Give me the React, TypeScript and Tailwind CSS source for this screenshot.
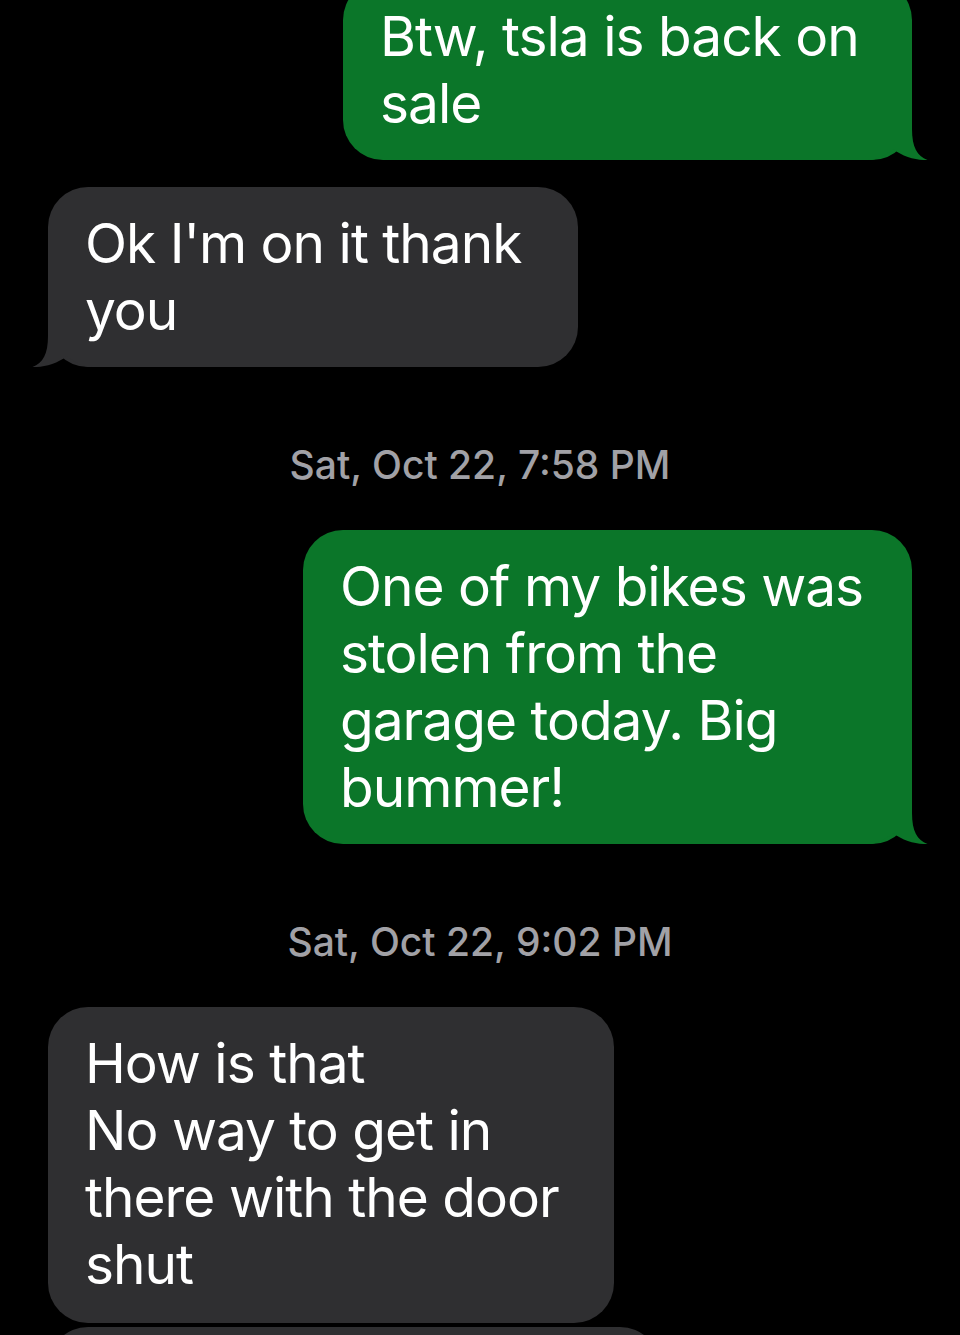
import React from "react";

function Tail({ side, color }: { side: "left" | "right"; color: string }) {
  return (
    <svg
      width="62"
      height="40"
      viewBox="0 0 62 40"
      className={
        side === "right"
          ? "absolute bottom-0 right-[-18px]"
          : "absolute bottom-0 left-[-18px] -scale-x-100"
      }
    >
      <path
        d="M0 0 H44 V9 C44 27 49 36 59.5 40 C49 40.5 35 37 25 29 C18 35 9 40 0 40 Z"
        fill={color}
      />
    </svg>
  );
}

function Bubble({
  sent,
  tail,
  lines,
  className,
}: {
  sent?: boolean;
  tail?: boolean;
  lines: string[];
  className: string;
}) {
  const color = sent ? "#0b7629" : "#2f2f31";
  return (
    <div
      className={
        "relative rounded-[40px] pl-[37px] pr-[20px] py-[23px] text-white text-[55px] leading-[67px] tracking-[-1px] " +
        (sent ? "bg-[#0b7629] " : "bg-[#2f2f31] ") +
        className
      }
    >
      <div className="relative z-10">
        {lines.map((l, i) => (
          <div key={i} className="whitespace-nowrap">
            {l}
          </div>
        ))}
      </div>
      {tail && <Tail side={sent ? "right" : "left"} color={color} />}
    </div>
  );
}

function Stamp({ text, className }: { text: string; className: string }) {
  return (
    <div
      className={
        "text-center text-[39px] leading-[46px] font-medium text-[#a1a1a6] " +
        className
      }
    >
      {text}
    </div>
  );
}

export default function App() {
  return (
    <div className="h-[1335px] w-full overflow-hidden bg-black font-['Inter',sans-serif]">
      <div className="flex flex-col px-[48px]">
        <Bubble
          sent
          tail
          className="self-end -mt-[20px] w-[569px]"
          lines={["Btw, tsla is back on", "sale"]}
        />
        <Bubble
          tail
          className="self-start mt-[27px] w-[530px]"
          lines={["Ok I'm on it thank", "you"]}
        />
        <Stamp text="Sat, Oct 22, 7:58 PM" className="mt-[75px]" />
        <Bubble
          sent
          tail
          className="self-end mt-[42px] w-[609px]"
          lines={[
            "One of my bikes was",
            "stolen from the",
            "garage today. Big",
            "bummer!",
          ]}
        />
        <Stamp text="Sat, Oct 22, 9:02 PM" className="mt-[75px]" />
        <Bubble
          className="self-start mt-[42px] w-[566px] pb-[25px]"
          lines={["How is that", "No way to get in", "there with the door", "shut"]}
        />
        <div className="self-start mt-[4px] w-[612px] h-[180px] rounded-[40px] bg-[#2f2f31]" />
      </div>
    </div>
  );
}
